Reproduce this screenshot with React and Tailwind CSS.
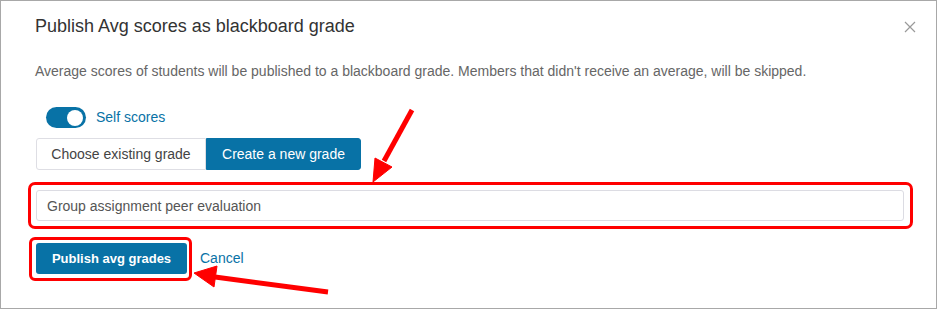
import { useState } from "react";

const Toggle = ({ on, onChange }) => (
  <button
    onClick={() => onChange(!on)}
    className={`relative w-[40px] h-[21px] rounded-full ${on ? "bg-[#0872a6]" : "bg-[#c5c5c5]"}`}
  >
    <span
      className={`absolute top-[2.5px] w-[16px] h-[16px] rounded-full bg-white ${on ? "left-[21px]" : "left-[3px]"}`}
    />
  </button>
);

const App = () => {
  const [selfScores, setSelfScores] = useState(true);
  const [mode, setMode] = useState("new");
  const [name, setName] = useState("Group assignment peer evaluation");

  return (
    <div
      className="relative w-[937px] h-[309px] bg-white border border-[#a8a8a8] text-[#333]"
      style={{ fontFamily: '"Liberation Sans", Arial, sans-serif' }}
    >
      <div className="flex items-center justify-between pl-[34px] pr-[20px] pt-[15px]">
        <h2 className="text-[18px] leading-[21px]">Publish Avg scores as blackboard grade</h2>
        <button className="text-[#9a9a9a]">
          <svg width="12" height="12" viewBox="0 0 12 12" stroke="currentColor" strokeWidth="1.2">
            <path d="M1 1l10 10M11 1L1 11" />
          </svg>
        </button>
      </div>

      <p className="pl-[34px] mt-[26px] text-[14px] leading-[16px] text-[#666]">
        Average scores of students will be published to a blackboard grade. Members that didn't receive an average, will be skipped.
      </p>

      <div className="flex items-center gap-[10px] pl-[45px] mt-[28px]">
        <Toggle on={selfScores} onChange={setSelfScores} />
        <span className="text-[14px] text-[#0872a6]">Self scores</span>
      </div>

      <div className="flex pl-[35px] mt-[10px]">
        <button
          onClick={() => setMode("existing")}
          className={`w-[170px] h-[32px] text-[14px] rounded-l-[3px] border ${mode === "existing" ? "bg-[#0872a6] text-white border-[#0872a6]" : "bg-white text-[#444] border-[#dedee4]"}`}
        >
          Choose existing grade
        </button>
        <button
          onClick={() => setMode("new")}
          className={`w-[155px] h-[32px] text-[14px] rounded-r-[3px] border ${mode === "new" ? "bg-[#0872a6] text-white border-[#0872a6]" : "bg-white text-[#444] border-[#dedee4]"}`}
        >
          Create a new grade
        </button>
      </div>

      <div className="ml-[27px] mt-[12px] w-[885px] h-[47px] border-[3px] border-[#ff0000] rounded-[7px] p-[5px] pr-[6px]">
        <input
          value={name}
          onChange={(e) => setName(e.target.value)}
          className="w-full h-[31px] border border-[#dcdce3] rounded-[3px] px-[10px] text-[14px] text-[#555] outline-none"
        />
      </div>

      <div className="flex items-center mt-[8px]">
        <div className="ml-[28px] w-[163px] h-[44px] border-[3px] border-[#ff0000] rounded-[6px] pl-[4px] pt-[3px]">
          <button className="w-[151px] h-[31px] bg-[#0872a6] rounded-[3px] text-white text-[13px] font-bold">
            Publish avg grades
          </button>
        </div>
        <a href="#" className="ml-[8px] -mt-[2px] text-[14px] text-[#0872a6]">
          Cancel
        </a>
      </div>

      <svg className="absolute left-0 top-0 pointer-events-none" width="937" height="309">
        <g fill="#ff0000" stroke="#ff0000">
          <line x1="411" y1="109" x2="383" y2="160" strokeWidth="5" />
          <polygon points="372,181 374,157 391,166" strokeWidth="1" />
          <line x1="327" y1="291" x2="214" y2="276" strokeWidth="5" />
          <polygon points="193,272 216,265 213,286" strokeWidth="1" />
        </g>
      </svg>
    </div>
  );
};

export default App;
